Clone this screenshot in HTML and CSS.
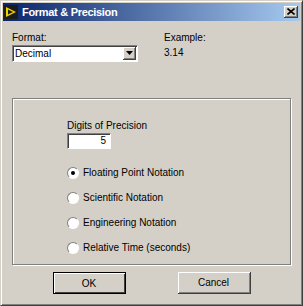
FILE: index.html
```html
<!DOCTYPE html>
<html lang="en">
<head>
  <meta charset="UTF-8" />
  <title>Format &amp; Precision</title>
  <link rel="stylesheet" href="styles.css">
</head>
<body>
  <div class="window">
    <div class="titlebar">
      <svg class="app-icon" width="14" height="14" viewBox="0 0 14 14">
        <rect x="0" y="0" width="14" height="14" fill="#1c1c1c"/>
        <polygon points="2,2 12,7 2,12" fill="#f0d000"/>
        <polygon points="4,4.5 9,7 4,9.5" fill="#1c1c1c"/>
      </svg>
      <span class="title">Format &amp; Precision</span>
      <div class="close-btn">
        <svg width="8" height="7" viewBox="0 0 8 7">
          <path d="M0.5 0.5 L7.5 6.5 M7.5 0.5 L0.5 6.5" stroke="#000" stroke-width="1.6"/>
        </svg>
      </div>
    </div>

    <div class="content">
      <div class="top-row">
        <div class="format-col">
          <div class="label">Format:</div>
          <div class="select">
            <span class="select-text">Decimal</span>
            <div class="select-arrow">
              <svg width="7" height="4" viewBox="0 0 7 4"><polygon points="0,0 7,0 3.5,4" fill="#000"/></svg>
            </div>
          </div>
        </div>
        <div class="example-col">
          <div class="label">Example:</div>
          <div class="example-value">3.14</div>
        </div>
      </div>

      <div class="group">
        <div class="label">Digits of Precision</div>
        <div class="digits-input">5</div>

        <div class="radios">
          <div class="radio-row"><span class="radio checked"></span>Floating Point Notation</div>
          <div class="radio-row"><span class="radio"></span>Scientific Notation</div>
          <div class="radio-row"><span class="radio"></span>Engineering Notation</div>
          <div class="radio-row"><span class="radio"></span>Relative Time (seconds)</div>
        </div>
      </div>

      <div class="buttons">
        <div class="btn default">OK</div>
        <div class="btn">Cancel</div>
      </div>
    </div>
  </div>
</body>
</html>
```

FILE: styles.css
```css
body {
  margin: 0;
  padding: 0;
  background: #d4d0c8;
  font-family: "Liberation Sans", Arial, sans-serif;
  font-size: 10px;
  color: #000;
}

.window {
  width: 303px;
  height: 306px;
  box-sizing: border-box;
  background: #d4d0c8;
  border-top: 1px solid #d4d0c8;
  border-left: 1px solid #d4d0c8;
  border-right: 1px solid #404040;
  border-bottom: 1px solid #404040;
  box-shadow: inset 1px 1px 0 #fff, inset -1px -1px 0 #808080;
  padding: 2px;
  display: flex;
  flex-direction: column;
}

.titlebar {
  height: 18px;
  background: linear-gradient(to right, #0a246a, #a6caf0);
  display: flex;
  align-items: center;
  padding: 0 2px 0 1px;
}

.app-icon {
  margin-right: 4px;
}

.title {
  color: #fff;
  font-weight: bold;
  font-size: 11px;
  letter-spacing: -0.3px;
  flex: 1;
}

.close-btn {
  width: 14px;
  height: 12px;
  box-sizing: border-box;
  background: #d4d0c8;
  border-right: 1px solid #404040;
  border-bottom: 1px solid #404040;
  box-shadow: inset 1px 1px 0 #fff, inset -1px -1px 0 #808080;
  display: flex;
  align-items: center;
  justify-content: center;
}

.content {
  padding: 10px 9px 0 9px;
  flex: 1;
}

.top-row {
  display: flex;
}

.format-col {
  width: 126px;
}

.example-col {
  margin-left: 26px;
}

.label {
  height: 13px;
  line-height: 13px;
}

.select {
  margin-top: 1px;
  height: 17px;
  box-sizing: border-box;
  background: #fff;
  border-top: 1px solid #808080;
  border-left: 1px solid #808080;
  border-right: 1px solid #fff;
  border-bottom: 1px solid #fff;
  box-shadow: inset 1px 1px 0 #404040;
  display: flex;
  align-items: center;
}

.select-text {
  flex: 1;
  padding-left: 2px;
}

.select-arrow {
  width: 13px;
  height: 13px;
  box-sizing: border-box;
  margin-right: 1px;
  background: #d4d0c8;
  border-right: 1px solid #404040;
  border-bottom: 1px solid #404040;
  box-shadow: inset 1px 1px 0 #fff, inset -1px -1px 0 #808080;
  display: flex;
  align-items: center;
  justify-content: center;
}

.example-value {
  margin-top: 3px;
}

.group {
  margin-top: 36px;
  height: 167px;
  box-sizing: border-box;
  border: 1px solid #808080;
  box-shadow: 1px 1px 0 #fff, inset 1px 1px 0 #fff;
  padding: 20px 0 0 54px;
}

.digits-input {
  margin-top: 1px;
  width: 44px;
  height: 16px;
  box-sizing: border-box;
  background: #fff;
  border-top: 1px solid #808080;
  border-left: 1px solid #808080;
  border-right: 1px solid #fff;
  border-bottom: 1px solid #fff;
  box-shadow: inset 1px 1px 0 #404040;
  text-align: right;
  padding-right: 4px;
  line-height: 14px;
}

.radios {
  margin-top: 17px;
  display: flex;
  flex-direction: column;
  gap: 12px;
}

.radio-row {
  display: flex;
  align-items: center;
  height: 13px;
}

.radio {
  width: 12px;
  height: 12px;
  box-sizing: border-box;
  border-radius: 50%;
  background: #fff;
  border: 1px solid;
  border-color: #808080 #fff #fff #808080;
  margin-right: 4px;
  position: relative;
}

.radio.checked::after {
  content: "";
  position: absolute;
  left: 3px;
  top: 3px;
  width: 4px;
  height: 4px;
  border-radius: 50%;
  background: #000;
}

.buttons {
  display: flex;
  justify-content: center;
  gap: 52px;
  margin-top: 7px;
}

.btn {
  width: 73px;
  height: 22px;
  box-sizing: border-box;
  background: #d4d0c8;
  border-right: 1px solid #404040;
  border-bottom: 1px solid #404040;
  box-shadow: inset 1px 1px 0 #fff, inset -1px -1px 0 #808080;
  display: flex;
  align-items: center;
  justify-content: center;
}

.btn.default {
  border: 1px solid #000;
  box-shadow: inset 1px 1px 0 #fff, inset -1px -1px 0 #404040;
}
```
